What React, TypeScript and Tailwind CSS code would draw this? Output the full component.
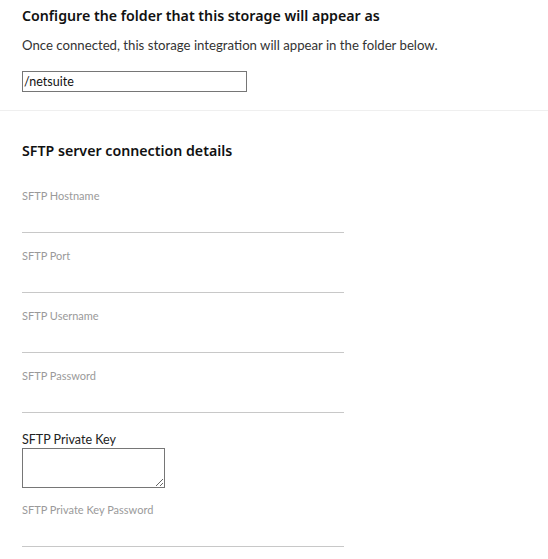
import React from "react";

const fields = ["SFTP Hostname", "SFTP Port", "SFTP Username", "SFTP Password"];

const LineField = ({ label, className = "pt-[16px]" }: { label: string; className?: string }) => (
  <div className={`w-[322px] ${className}`}>
    <div className="text-[11px] leading-[14px] text-[#9a9a9a]">{label}</div>
    <input
      type="text"
      className="block w-full h-[30px] border-b border-[#c8c8c8] bg-transparent outline-none text-[12px]"
    />
  </div>
);

export default function App() {
  return (
    <div className="min-h-screen bg-white text-[#1a1a1a]" style={{ fontFamily: "Lato, 'Noto Sans', sans-serif" }}>
      <section className="px-[22px] pt-[6px] pb-[18px] border-b border-[#efefef]">
        <h2 className="text-[14.2px] leading-[20px] font-semibold text-[#111]" style={{ fontFamily: "'Noto Sans', sans-serif" }}>
          Configure the folder that this storage will appear as
        </h2>
        <p className="mt-[10px] text-[13.2px] leading-[18px] text-[#333]">
          Once connected, this storage integration will appear in the folder below.
        </p>
        <input
          type="text"
          defaultValue="/netsuite"
          className="mt-[17px] block w-[225px] h-[21px] border border-[#767676] px-[1px] text-[12.5px] text-[#111] outline-none"
        />
      </section>

      <section className="px-[22px] pt-[30px]">
        <h2 className="text-[14.2px] leading-[20px] font-semibold text-[#111]" style={{ fontFamily: "'Noto Sans', sans-serif" }}>
          SFTP server connection details
        </h2>
        <div className="mt-[28px] flex flex-col">
          {fields.map((f, i) => (
            <LineField key={f} label={f} className={i === 0 ? "pt-0" : "pt-[16px]"} />
          ))}
          <div className="pt-[19px]">
            <label className="block text-[12.5px] leading-[16px] text-[#222]">SFTP Private Key</label>
            <textarea className="block w-[143px] h-[40px] border border-[#767676] outline-none text-[12px]" />
          </div>
          <LineField label="SFTP Private Key Password" className="pt-[15px]" />
        </div>
      </section>
    </div>
  );
}
